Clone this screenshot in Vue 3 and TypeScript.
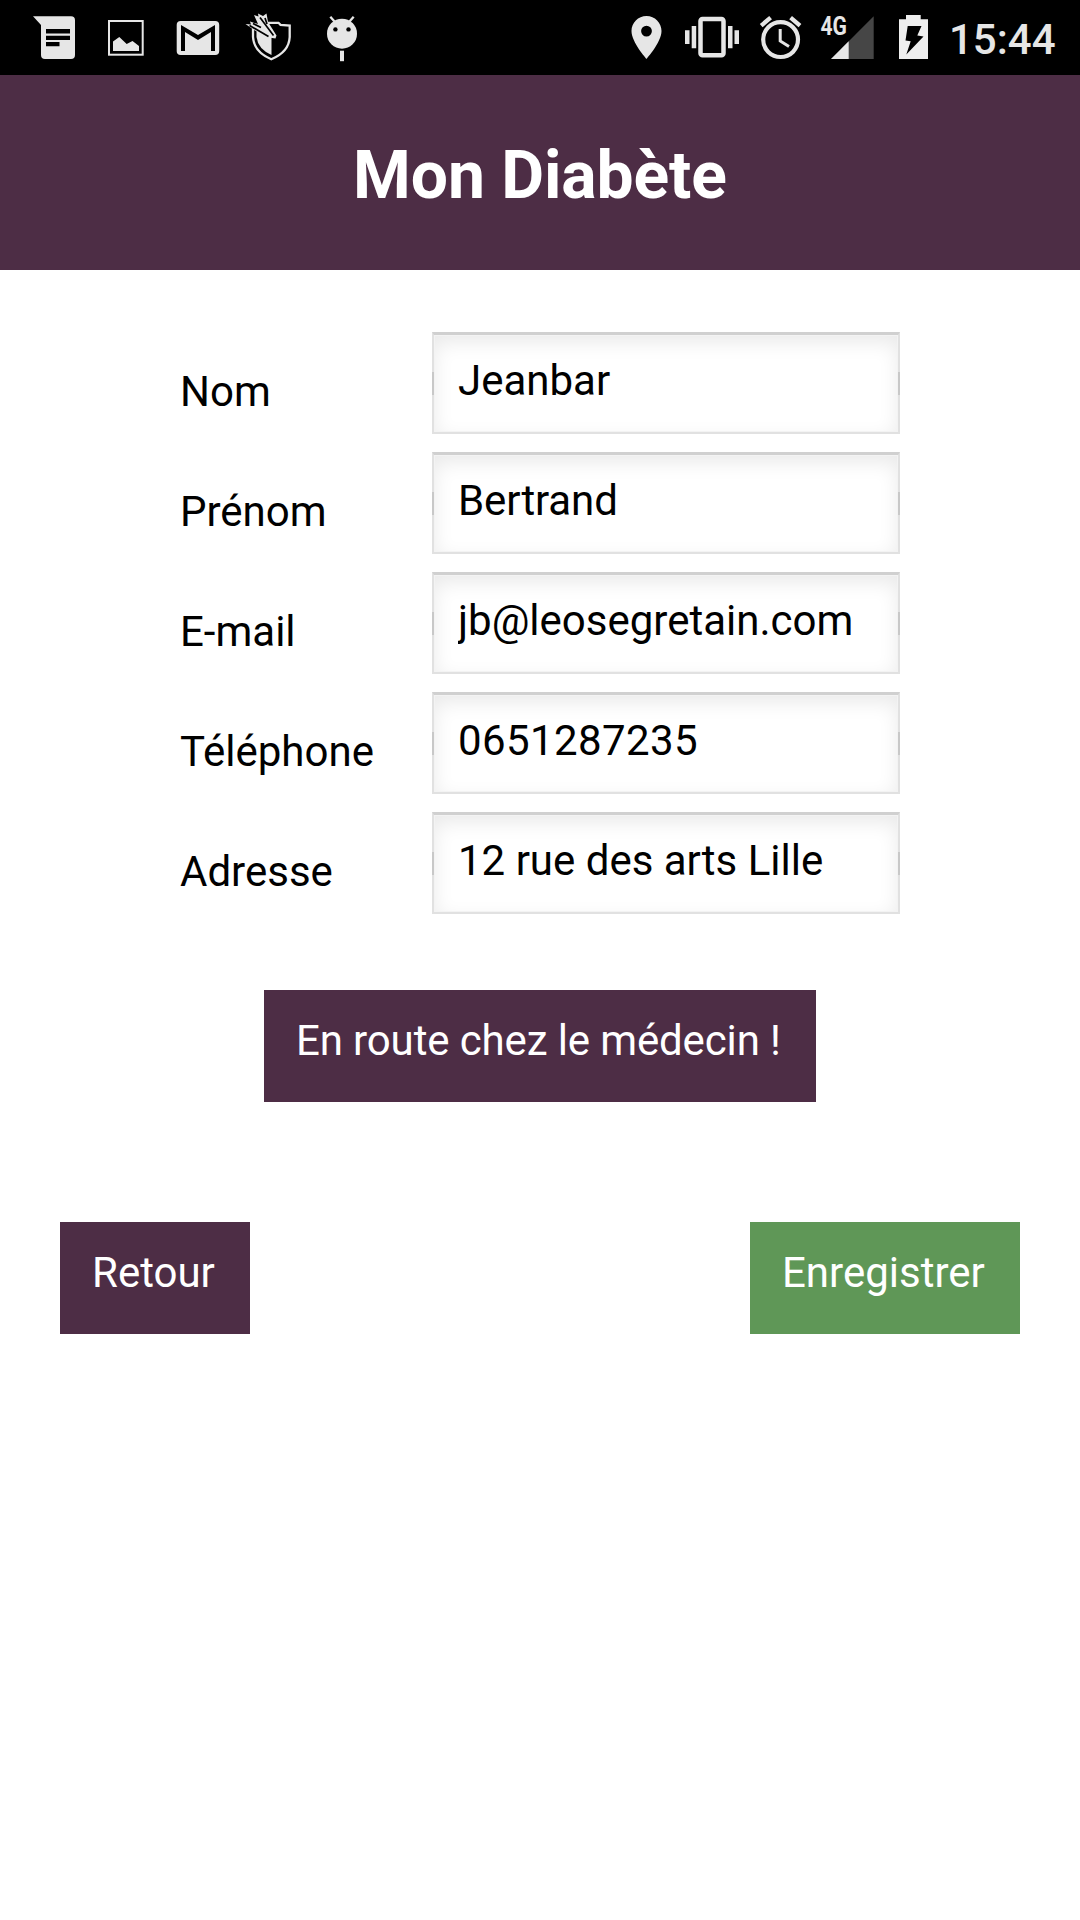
<script setup lang="ts">
import { ref } from 'vue'

interface Field {
  id: string
  label: string
  value: string
}

const fields = ref<Field[]>([
  { id: 'nom', label: 'Nom', value: 'Jeanbar' },
  { id: 'prenom', label: 'Prénom', value: 'Bertrand' },
  { id: 'email', label: 'E-mail', value: 'jb@leosegretain.com' },
  { id: 'telephone', label: 'Téléphone', value: '0651287235' },
  { id: 'adresse', label: 'Adresse', value: '12 rue des arts Lille' },
])
</script>

<template>
  <div class="screen">
    <div class="status-bar">
      <div class="icons">
        <!-- message -->
        <svg width="72" height="75" viewBox="18 0 72 75">
          <path fill="#e6e6e6" d="M33 16.3H71a4 4 0 0 1 4 4V55a4 4 0 0 1-4 4H45a4 4 0 0 1-4-4V25z" />
          <path fill="#000" d="M46 29h24v4.500H46zM46 35.700h24v4.300H46zM46 42h13.500v4.300H46z" />
        </svg>
        <!-- picture -->
        <svg width="72" height="75" viewBox="90 0 72 75">
          <rect x="109" y="21" width="33.700" height="33.700" fill="none" stroke="#e6e6e6" stroke-width="2" />
          <path fill="#e6e6e6" d="M113 41.500L119.300 37 126.700 44 132.500 41 139 46V51H113z" />
        </svg>
        <!-- mail -->
        <svg width="72" height="75" viewBox="162 0 72 75">
          <rect x="176.700" y="21" width="42.500" height="34" rx="4" fill="#e6e6e6" />
          <path fill="#000" d="M181 51V25L198 35 215 25V51H211V32L198 40 185 32V51z" />
        </svg>
        <!-- shield with darts -->
        <svg width="72" height="75" viewBox="234 0 72 75">
          <path
            d="M253 25V37Q254 52 271.300 59.200 289 52 289.700 37V25.500L280.500 24.800 278.500 22.800H268"
            fill="none" stroke="#e6e6e6" stroke-width="2.300" />
          <path fill="#e6e6e6" d="M256.500 28L271.500 30V55Q258 49 256.500 37z" />
          <path fill="#e6e6e6" d="M245.500 24L251 24.500 250 21.500 258 24 254 15 258.500 16.500 258 13.500 263 16 266.500 13.500 268 22 276.500 35.500 275.500 38.500 269 37.500 254 30z" />
          <path fill="none" stroke="#000" stroke-width="1.700" d="M249.500 25.500L268.500 36.500M260 17.500L273.500 35.500M253 23.500L261 27.500M265 18L267 24" />
        </svg>
        <!-- android debug -->
        <svg width="72" height="75" viewBox="306 0 72 75">
          <circle cx="342" cy="33.700" r="15" fill="#e6e6e6" />
          <path d="M330.300 16.700L335 22M353.700 16.700L349 22" stroke="#e6e6e6" stroke-width="2.300" />
          <circle cx="335.400" cy="29.400" r="2.200" />
          <circle cx="348.500" cy="29.400" r="2.200" />
          <rect x="340" y="50.700" width="4" height="10.500" fill="#e6e6e6" />
        </svg>
      </div>

      <div class="icons system">
        <!-- location -->
        <svg width="48" height="75" viewBox="626 0 48 75">
          <path fill="#e6e6e6" fill-rule="evenodd"
            d="M646.500 16c-8.400 0-15 6.700-15 15.100 0 11.200 15 27.900 15 27.900s15-16.700 15-27.900c0-8.400-6.600-15.100-15-15.100zm0 20.500a5.400 5.400 0 1 1 0-10.800 5.400 5.400 0 0 1 0 10.800z" />
        </svg>
        <!-- vibrate -->
        <svg width="76" height="75" viewBox="674 0 76 75">
          <rect x="700.500" y="19" width="23" height="36.200" rx="2" fill="none" stroke="#e6e6e6" stroke-width="4.500" />
          <path fill="#e6e6e6" d="M685 30.300h4.500V44H685zM691.700 26h4.500v22.300h-4.500zM728 26h4.500v22.300H728zM734.500 30.300h4.500V44h-4.500z" />
        </svg>
        <!-- alarm -->
        <svg width="62" height="75" viewBox="750 0 62 75">
          <g fill="none" stroke="#e6e6e6">
            <circle cx="780.600" cy="39.600" r="17.400" stroke-width="4.200" />
            <path d="M780.200 29V41L789 46.500" stroke-width="3" />
            <path d="M761.200 25.600L770.600 17.700M790.600 17.700L800 25.600" stroke-width="4.300" />
          </g>
        </svg>
        <!-- 4G signal -->
        <svg width="70" height="75" viewBox="812 0 70 75">
          <path fill="#464646" d="M831 59L873.700 16.300V59z" />
          <path fill="#e6e6e6" d="M831 59L848.700 41.300V59z" />
          <text x="820.500" y="35.300" class="network" textLength="26.500" lengthAdjust="spacingAndGlyphs">4G</text>
        </svg>
        <!-- charging battery -->
        <svg width="58" height="75" viewBox="882 0 58 75">
          <path fill="#eee" d="M906 15h14.700v4.200H928V59H899V19.200H906z" />
          <path fill="#000" d="M907.700 26H921.500L917.300 35.500 923.500 36.500 906.300 54.500 910.700 41.200 905.500 40.500z" />
        </svg>
        <span class="clock">15:44</span>
      </div>
    </div>

    <header class="header">
      <h1>Mon Diabète</h1>
    </header>

    <main>
      <form class="form" @submit.prevent>
        <div v-for="field in fields" :key="field.id" class="row">
          <label :for="field.id">{{ field.label }}</label>
          <div class="box">
            <input :id="field.id" v-model="field.value" :class="field.id" type="text" />
          </div>
        </div>
      </form>
      <button class="btn route" type="button">En route chez le médecin !</button>
      <div class="actions">
        <button class="btn back" type="button">Retour</button>
        <button class="btn save" type="button">Enregistrer</button>
      </div>
    </main>
  </div>
</template>

<style>
body {
  margin: 0;
  background: #fff;
}
</style>

<style scoped>
.screen {
  width: 1080px;
  height: 1920px;
  overflow: hidden;
  background: #fff;
  color: #000;
  font-family: Roboto, sans-serif;
  font-size: 42px;
}
.status-bar {
  display: flex;
  justify-content: space-between;
  height: 75px;
  padding-left: 18px;
  background: #000;
}
.icons {
  display: flex;
}
.icons svg {
  display: block;
  flex: none;
}
.system {
  width: 454px;
}
.network {
  fill: #e6e6e6;
  font: 700 25px Roboto, sans-serif;
}
.clock {
  margin-left: 9px;
  line-height: 79px;
  font-weight: 500;
  color: #e6e6e6;
}
.header {
  height: 195px;
  background: #4d2d45;
  text-align: center;
}
h1 {
  margin: 0;
  color: #fff;
  font-size: 66px;
  font-weight: 700;
  line-height: 201px;
  letter-spacing: -0.1px;
}
.form {
  display: flex;
  flex-direction: column;
  gap: 18px;
  padding: 62px 180px 0;
}
.row {
  display: flex;
  justify-content: space-between;
  height: 102px;
}
label {
  line-height: 120px;
}
.box {
  position: relative;
  box-sizing: border-box;
  width: 468px;
  border: 2px solid #e1e1e1;
  border-top: 3px solid #d0d0d0;
  box-shadow:
    inset 0 0 0 1px #f3f3f3,
    inset 0 7px 20px rgba(0, 0, 0, 0.09);
}
.box::before,
.box::after {
  content: '';
  position: absolute;
  top: 37px;
  width: 2px;
  height: 23px;
  background: #c8c8c8;
}
.box::before {
  left: -2px;
}
.box::after {
  right: -2px;
}
input {
  display: block;
  box-sizing: border-box;
  width: 100%;
  height: 90px;
  padding: 0 24px;
  border: 0;
  outline: 0;
  background: transparent;
  color: #000;
  font: inherit;
}
.prenom {
  letter-spacing: -0.1px;
}
.telephone {
  letter-spacing: 0.4px;
}
.btn {
  height: 112px;
  padding: 0 0 12px 32px;
  border: 0;
  background: #4d2d45;
  color: #fff;
  font: inherit;
  text-align: left;
  white-space: nowrap;
}
.route {
  display: block;
  width: 552px;
  margin: 76px auto 0;
  letter-spacing: -0.13px;
}
.back {
  width: 190px;
}
.save {
  width: 270px;
  background: #5f9757;
}
.actions {
  display: flex;
  justify-content: space-between;
  padding: 120px 60px 0;
}
</style>
